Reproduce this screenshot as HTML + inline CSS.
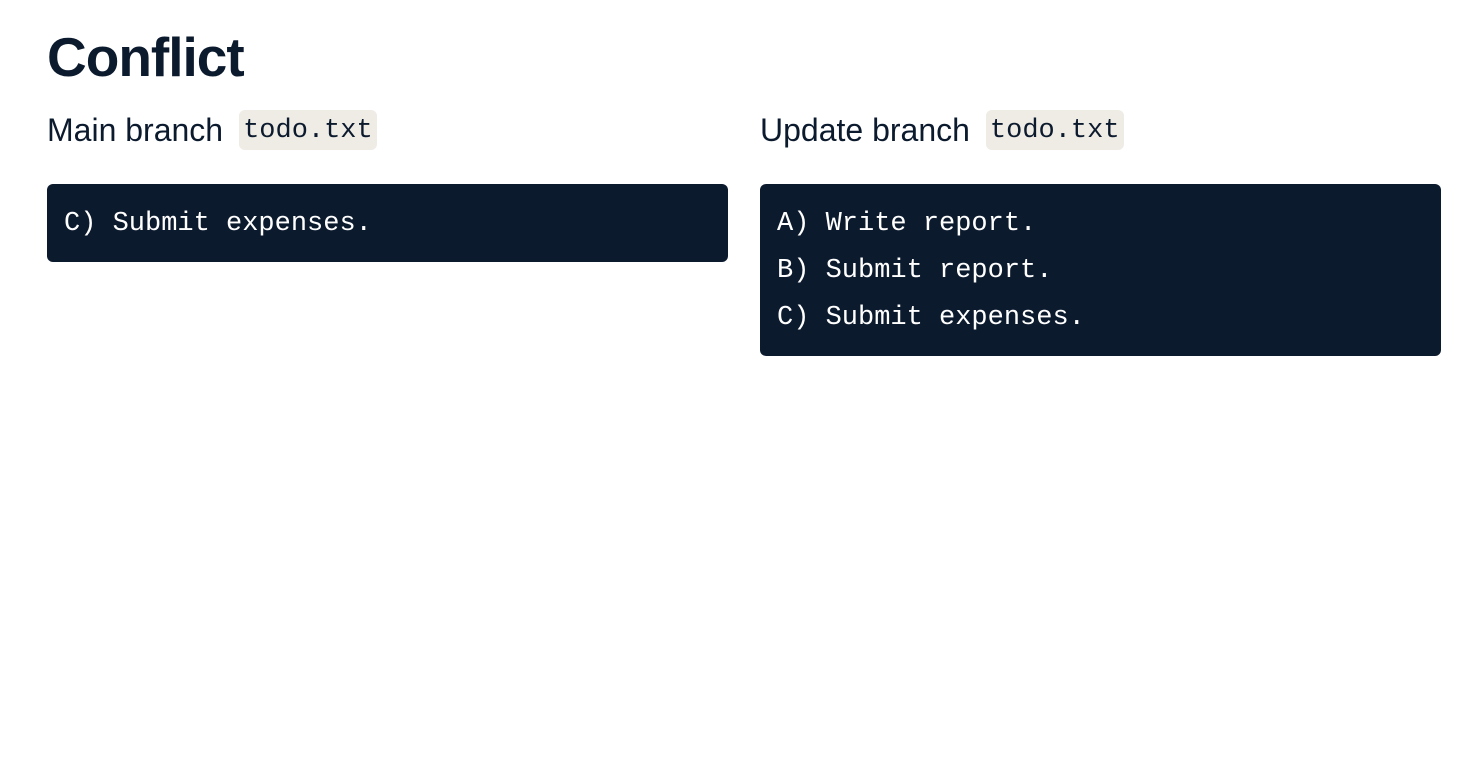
<!DOCTYPE html>
<html><head><style>
body{margin:0;width:1480px;height:760px;background:#fff;font-family:"Liberation Sans",sans-serif;color:#0c1a2e;position:relative;overflow:hidden}
h1{position:absolute;left:47px;top:22px;margin:0;font-size:55px;font-weight:bold;letter-spacing:-1px;line-height:70px}
.lab{position:absolute;top:110px;font-size:32px;line-height:40px;height:40px;display:flex;align-items:center}
.chip{font-family:"Liberation Mono",monospace;font-size:27px;background:#efebe5;border-radius:6px;padding:0 4px;margin-left:16px;height:40px;line-height:42px}
.box{position:absolute;top:184px;width:681px;background:#0c1a2e;border-radius:6px;box-sizing:border-box;padding:17px 17px 14px;color:#fff;font-family:"Liberation Mono",monospace;font-size:27px;line-height:47px;white-space:pre}
</style></head><body>
<h1>Conflict</h1>
<div class="lab" style="left:47px">Main branch<span class="chip">todo.txt</span></div>
<div class="lab" style="left:760px">Update branch<span class="chip">todo.txt</span></div>
<div class="box" style="left:47px">C) Submit expenses.</div>
<div class="box" style="left:760px">A) Write report.
B) Submit report.
C) Submit expenses.</div>
</body></html>
